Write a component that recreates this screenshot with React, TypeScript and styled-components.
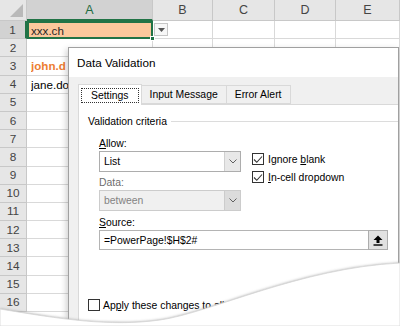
import * as React from "react";
import styled, { createGlobalStyle } from "styled-components";

const GlobalStyle = createGlobalStyle`
  html, body {
    margin: 0;
    padding: 0;
    background: #ffffff;
  }
  body {
    font-family: "Liberation Sans", Arial, sans-serif;
    color: #000000;
  }
  * {
    box-sizing: border-box;
  }
`;

const Stage = styled.div`
  position: relative;
  width: 400px;
  height: 326px;
  overflow: hidden;
  background: #ffffff;
`;

// ---- spreadsheet ----

const Sheet = styled.div`
  display: grid;
  grid-template-columns: 27px 126px 60px 62px 61px 64px;
  grid-template-rows: 21px repeat(16, 18.2px);
`;

const Corner = styled.div`
  background: #e6e6e6;
  border-right: 1px solid #c8c8c8;
  border-bottom: 1px solid #c8c8c8;
  display: flex;
  align-items: flex-end;
  justify-content: flex-end;
  padding: 0 3px 3px 0;
`;

const ColHead = styled.div<{ $active?: boolean }>`
  background: ${(p) => (p.$active ? "#d2d2d2" : "#e6e6e6")};
  border-right: 1px solid #c8c8c8;
  border-bottom: ${(p) => (p.$active ? "2px solid #217346" : "1px solid #c8c8c8")};
  color: ${(p) => (p.$active ? "#1e6b41" : "#444444")};
  font-size: 12.5px;
  display: flex;
  align-items: center;
  justify-content: center;
`;

const RowHead = styled.div<{ $active?: boolean }>`
  background: ${(p) => (p.$active ? "#d2d2d2" : "#e6e6e6")};
  border-right: ${(p) => (p.$active ? "2px solid #217346" : "1px solid #c8c8c8")};
  border-bottom: 1px solid #c8c8c8;
  color: #444444;
  font-size: 11.8px;
  display: flex;
  align-items: center;
  justify-content: center;
`;

const Cell = styled.div<{ $bold?: boolean }>`
  border-right: 1px solid #d9d9d9;
  border-bottom: 1px solid #d9d9d9;
  font-size: 11.6px;
  padding-left: 4px;
  display: flex;
  align-items: center;
  white-space: nowrap;
  font-weight: ${(p) => (p.$bold ? 700 : 400)};
  color: ${(p) => (p.$bold ? "#ed7d31" : "#000000")};
`;

// the dialog hides the rest of these entries
const Peek = styled.span`
  display: block;
  width: 37px;
  overflow: hidden;
`;

const ActiveCell = styled.div`
  position: relative;
  background: #fbc89c;
  border: 2px solid #217346;
  font-size: 11.6px;
  padding-left: 2px;
  display: flex;
  align-items: center;
  color: #262626;
`;

const FillHandle = styled.span`
  position: absolute;
  right: -4px;
  bottom: -4px;
  width: 5px;
  height: 5px;
  background: #217346;
  border: 1px solid #ffffff;
`;

const DropCell = styled.div`
  border-right: 1px solid #d9d9d9;
  border-bottom: 1px solid #d9d9d9;
  display: flex;
  align-items: center;
  padding-left: 1px;
`;

const DropButton = styled.div`
  width: 14px;
  height: 13px;
  border: 1px solid #c6c6c6;
  background: #f7f7f7;
  display: flex;
  align-items: center;
  justify-content: center;
`;

// ---- dialog ----

const Dialog = styled.div`
  position: absolute;
  left: 68px;
  top: 47px;
  right: 1px;
  bottom: 0;
  display: flex;
  flex-direction: column;
  background: #f0f0f0;
  border: 1px solid #a0a0a0;
  box-shadow: -2px 2px 6px rgba(0, 0, 0, 0.18);
`;

const TitleBar = styled.div`
  height: 29px;
  flex: none;
  background: #ffffff;
  display: flex;
  align-items: center;
  padding-left: 8px;
  font-size: 11.7px;
  color: #000000;
`;

const Body = styled.div`
  flex: 1;
  display: flex;
  flex-direction: column;
  padding: 7px 0 0 9px;
`;

const TabStrip = styled.div`
  display: flex;
  align-items: flex-end;
  height: 20px;
  position: relative;
  z-index: 1;
`;

const Tab = styled.div<{ $selected?: boolean }>`
  height: ${(p) => (p.$selected ? "21px" : "19px")};
  margin-bottom: ${(p) => (p.$selected ? "-1px" : "0")};
  padding: ${(p) => (p.$selected ? "2px" : "0 8px")};
  background: ${(p) => (p.$selected ? "#ffffff" : "#f0f0f0")};
  border: 1px solid #d9d9d9;
  border-bottom: ${(p) => (p.$selected ? "none" : "1px solid #d9d9d9")};
  margin-left: ${(p) => (p.$selected ? "0" : "-1px")};
  font-size: 10.4px;
  display: flex;
  align-items: center;
`;

const FocusBox = styled.div`
  height: 15px;
  padding: 0 9px;
  border: 1px dotted #333333;
  display: flex;
  align-items: center;
`;

const Panel = styled.div`
  flex: 1;
  background: #ffffff;
  border: 1px solid #d9d9d9;
  border-right: none;
  border-bottom: none;
  padding: 9px 0 0 9px;
  font-size: 10.4px;
`;

const GroupHead = styled.div`
  display: flex;
  align-items: center;
  gap: 4px;
  height: 14px;
`;

const GroupLine = styled.div`
  flex: 1;
  height: 1px;
  background: #dcdcdc;
`;

const GroupBody = styled.div`
  display: flex;
  gap: 11px;
  padding: 8px 0 0 11px;
`;

const FieldColumn = styled.div`
  display: flex;
  flex-direction: column;
  width: 142px;
`;

const Label = styled.div<{ $disabled?: boolean }>`
  height: 14px;
  display: flex;
  align-items: center;
  color: ${(p) => (p.$disabled ? "#6d6d6d" : "#000000")};
  margin-bottom: 1px;
`;

const Combo = styled.div<{ $disabled?: boolean }>`
  height: 21px;
  display: flex;
  border: 1px solid ${(p) => (p.$disabled ? "#cccccc" : "#adadad")};
  background: ${(p) => (p.$disabled ? "#f0f0f0" : "#ffffff")};
  color: ${(p) => (p.$disabled ? "#838383" : "#000000")};
  margin-bottom: 3px;
`;

const ComboText = styled.div`
  flex: 1;
  display: flex;
  align-items: center;
  padding-left: 4px;
`;

const ComboButton = styled.div<{ $disabled?: boolean }>`
  width: 16px;
  display: flex;
  align-items: center;
  justify-content: center;
  border-left: 1px solid ${(p) => (p.$disabled ? "#cccccc" : "#d0d0d0")};
  background: ${(p) => (p.$disabled ? "#dcdcdc" : "#e8e8e8")};
`;

const CheckColumn = styled.div`
  display: flex;
  flex-direction: column;
  gap: 6px;
  padding-top: 17px;
`;

const CheckRow = styled.div`
  display: flex;
  align-items: center;
  gap: 4px;
  height: 12px;
`;

const Box = styled.div`
  width: 12px;
  height: 12px;
  border: 1px solid #333333;
  background: #ffffff;
  display: flex;
  align-items: center;
  justify-content: center;
`;

const SourceBlock = styled.div`
  padding-left: 11px;
  margin-top: 1px;
`;

const SourceInput = styled.div`
  width: 289px;
  height: 20px;
  display: flex;
  border: 1px solid #b4b4b4;
`;

const SourceText = styled.div`
  flex: 1;
  display: flex;
  align-items: center;
  padding-left: 4px;
`;

const RefButton = styled.div`
  width: 20px;
  display: flex;
  align-items: center;
  justify-content: center;
  background: #e1e1e1;
  border: 1px solid #adadad;
  margin: -1px -1px -1px 0;
`;

const ApplyRow = styled(CheckRow)`
  margin-top: 49px;
  gap: 3px;
  white-space: nowrap;
`;

const Curl = styled.svg`
  position: absolute;
  left: 0;
  top: 0;
  pointer-events: none;
`;

const Chevron = () => (
  <svg width="8" height="5" viewBox="0 0 8 5">
    <path d="M0.5 0.5 L4 4 L7.5 0.5" fill="none" stroke="#606060" strokeWidth="1" />
  </svg>
);

const Tick = () => (
  <svg width="10" height="9" viewBox="0 0 10 9">
    <path d="M1 4.5 L3.8 7.3 L9 1.5" fill="none" stroke="#333333" strokeWidth="1.1" />
  </svg>
);

const rows = Array.from({ length: 16 }, (_, i) => i + 1);

const entries: Record<number, { text: string; bold?: boolean }> = {
  3: { text: "john.d", bold: true },
  4: { text: "jane.do" },
};

const App = () => {
  return (
    <Stage>
      <GlobalStyle />
      <Sheet>
        <Corner>
          <svg width="13" height="13" viewBox="0 0 13 13">
            <path d="M13 0 L13 13 L0 13 Z" fill="#b9b9b9" />
          </svg>
        </Corner>
        <ColHead $active>A</ColHead>
        <ColHead>B</ColHead>
        <ColHead>C</ColHead>
        <ColHead>D</ColHead>
        <ColHead>E</ColHead>
        {rows.map((r) => (
          <React.Fragment key={r}>
            <RowHead $active={r === 1}>{r}</RowHead>
            {r === 1 ? (
              <ActiveCell>
                xxx.ch
                <FillHandle />
              </ActiveCell>
            ) : (
              <Cell $bold={entries[r]?.bold}>
                {entries[r] && <Peek>{entries[r].text}</Peek>}
              </Cell>
            )}
            {r === 1 ? (
              <DropCell>
                <DropButton>
                  <svg width="7" height="4" viewBox="0 0 7 4">
                    <path d="M0 0 L7 0 L3.5 4 Z" fill="#555555" />
                  </svg>
                </DropButton>
              </DropCell>
            ) : (
              <Cell />
            )}
            <Cell />
            <Cell />
            <Cell />
          </React.Fragment>
        ))}
      </Sheet>

      <Dialog>
        <TitleBar>Data Validation</TitleBar>
        <Body>
          <TabStrip>
            <Tab $selected>
              <FocusBox>Settings</FocusBox>
            </Tab>
            <Tab>Input Message</Tab>
            <Tab>Error Alert</Tab>
          </TabStrip>
          <Panel>
            <GroupHead>
              Validation criteria
              <GroupLine />
            </GroupHead>
            <GroupBody>
              <FieldColumn>
                <Label>
                  <u>A</u>llow:
                </Label>
                <Combo>
                  <ComboText>List</ComboText>
                  <ComboButton>
                    <Chevron />
                  </ComboButton>
                </Combo>
                <Label $disabled>Data:</Label>
                <Combo $disabled>
                  <ComboText>between</ComboText>
                  <ComboButton $disabled>
                    <Chevron />
                  </ComboButton>
                </Combo>
              </FieldColumn>
              <CheckColumn>
                <CheckRow>
                  <Box>
                    <Tick />
                  </Box>
                  <span>
                    Ignore <u>b</u>lank
                  </span>
                </CheckRow>
                <CheckRow>
                  <Box>
                    <Tick />
                  </Box>
                  <span>
                    <u>I</u>n-cell dropdown
                  </span>
                </CheckRow>
              </CheckColumn>
            </GroupBody>
            <SourceBlock>
              <Label>
                <u>S</u>ource:
              </Label>
              <SourceInput>
                <SourceText>=PowerPage!$H$2#</SourceText>
                <RefButton>
                  <svg width="10" height="11" viewBox="0 0 10 11">
                    <path d="M5 0.5 L9.5 5 L6.5 5 L6.5 8 L3.5 8 L3.5 5 L0.5 5 Z" fill="#000000" />
                    <rect x="0.5" y="9.3" width="9" height="1.4" fill="#000000" />
                  </svg>
                </RefButton>
              </SourceInput>
            </SourceBlock>
            <ApplyRow>
              <Box />
              <span>
                Ap<u>p</u>ly these changes to all other cells with the same settings
              </span>
            </ApplyRow>
          </Panel>
        </Body>
      </Dialog>

      <Curl width="400" height="326" viewBox="0 0 400 326">
        <defs>
          <filter id="soft" x="-10%" y="-50%" width="120%" height="200%">
            <feGaussianBlur stdDeviation="1.6" />
          </filter>
        </defs>
        <path
          d="M0 309 C 60 319 110 327 160 320 S 300 268 400 263"
          fill="none"
          stroke="#9a9a9a"
          strokeWidth="3"
          filter="url(#soft)"
          transform="translate(0 1.5)"
        />
        <path
          d="M0 309 C 60 319 110 327 160 320 S 300 268 400 263 L 400 326 L 0 326 Z"
          fill="#ffffff"
          stroke="#d6d6d6"
          strokeWidth="0.8"
        />
      </Curl>
    </Stage>
  );
};

export default App;
